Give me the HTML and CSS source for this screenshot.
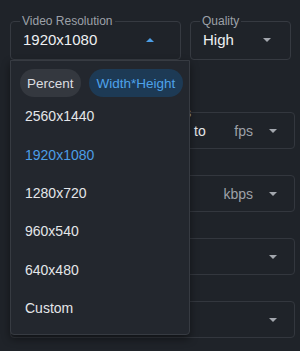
FILE: index.html
```html
<!DOCTYPE html>
<html>
<head>
<meta charset="utf-8">
<link rel="stylesheet" href="styles.css">
</head>
<body>
<div class="page">
  <div class="top-row">
    <fieldset class="field">
      <legend>Video Resolution</legend>
      <div class="field-body">
        <span class="value">1920x1080</span>
        <span class="caret caret-up"></span>
      </div>
    </fieldset>
    <fieldset class="field">
      <legend>Quality</legend>
      <div class="field-body">
        <span class="value">High</span>
        <span class="caret"></span>
      </div>
    </fieldset>
  </div>

  <div class="settings">
    <div class="group">
      <div class="group-label">Limits</div>
      <div class="box">
        <span class="range-min"></span>
        <span class="range-sep">to</span>
        <span class="unit">fps</span>
        <span class="caret"></span>
      </div>
    </div>
    <div class="group">
      <div class="box">
        <span class="range-min"></span>
        <span class="unit">kbps</span>
        <span class="caret"></span>
      </div>
    </div>
    <div class="group">
      <div class="box">
        <span class="range-min"></span>
        <span class="unit"></span>
        <span class="caret"></span>
      </div>
    </div>
    <div class="group">
      <div class="box">
        <span class="range-min"></span>
        <span class="unit"></span>
        <span class="caret"></span>
      </div>
    </div>
  </div>

  <div class="menu">
    <div class="chips">
      <span class="chip">Percent</span>
      <span class="chip chip-active">Width*Height</span>
    </div>
    <ul class="options">
      <li>2560x1440</li>
      <li class="selected">1920x1080</li>
      <li>1280x720</li>
      <li>960x540</li>
      <li>640x480</li>
      <li>Custom</li>
    </ul>
  </div>
</div>
</body>
</html>
```

FILE: styles.css
```css
* { box-sizing: border-box; }

html, body {
  margin: 0;
  padding: 0;
  background: #1f2329;
  font-family: "Liberation Sans", Arial, sans-serif;
  color: #e4e6e9;
}

.page {
  position: relative;
  width: 300px;
  height: 351px;
  overflow: hidden;
}

.top-row {
  display: grid;
  grid-template-columns: 171px 101px;
  column-gap: 9px;
  padding: 14px 0 0 10px;
}

.field {
  margin: 0;
  padding: 0 12px;
  min-width: 0;
  border: 1px solid #363a41;
  border-radius: 4px;
}

.field legend {
  padding: 0 2px;
  margin-left: -3px;
  font-size: 12px;
  line-height: 14px;
  color: #9da1a8;
}

.field-body {
  display: flex;
  align-items: center;
  height: 31px;
  padding-bottom: 7px;
}

.value {
  flex: 1;
  font-size: 15px;
  line-height: 20px;
  color: #eef0f2;
}

.caret {
  width: 0;
  height: 0;
  border-left: 4.5px solid transparent;
  border-right: 4.5px solid transparent;
  border-top: 4.5px solid #a3a7ae;
  margin-right: 7px;
}

.caret-up {
  border-top: 0;
  border-bottom: 4.5px solid #4c9ee6;
  margin-right: 14px;
}

.settings {
  display: flex;
  flex-direction: column;
  gap: 24px;
  padding: 0 5px 0 10px;
  margin-top: 46px;
}

.group-label {
  font-size: 12px;
  line-height: 14px;
  color: #9da1a8;
  padding-left: 150px;
  margin-bottom: -8px;
}

.group + .group { margin-top: 2px; }

.box {
  display: flex;
  align-items: center;
  height: 37px;
  padding: 0 17px 0 12px;
  border: 1px solid #33373e;
  border-radius: 4px;
  font-size: 14px;
}

.range-min {
  width: 171px;
}

.range-sep {
  color: #e4e6e9;
}

.unit {
  flex: 1;
  text-align: right;
  color: #9da1a8;
  margin-right: 16px;
}

.box .caret { margin-right: 0; }

.menu {
  position: absolute;
  left: 10px;
  top: 60px;
  width: 180px;
  height: 275px;
  background: #23272e;
  border: 1px solid #373b42;
  border-radius: 0 0 4px 4px;
  box-shadow: 0 4px 8px rgba(0, 0, 0, 0.45);
  padding: 8px 0 0 9px;
}

.chips {
  display: flex;
  gap: 8px;
}

.chip {
  display: inline-flex;
  align-items: center;
  height: 28px;
  padding: 0 7px;
  border-radius: 14px;
  background: #34383f;
  color: #dcdee1;
  font-size: 13.5px;
}

.chip-active {
  background: #1d3a55;
  color: #4ea2ea;
  padding: 0 8px;
}

.options {
  list-style: none;
  margin: 0;
  padding: 0 0 0 5px;
}

.options li {
  height: 38.4px;
  display: flex;
  align-items: center;
  font-size: 14px;
  color: #e4e6e9;
}

.options li.selected {
  color: #4c9ee6;
}
```
